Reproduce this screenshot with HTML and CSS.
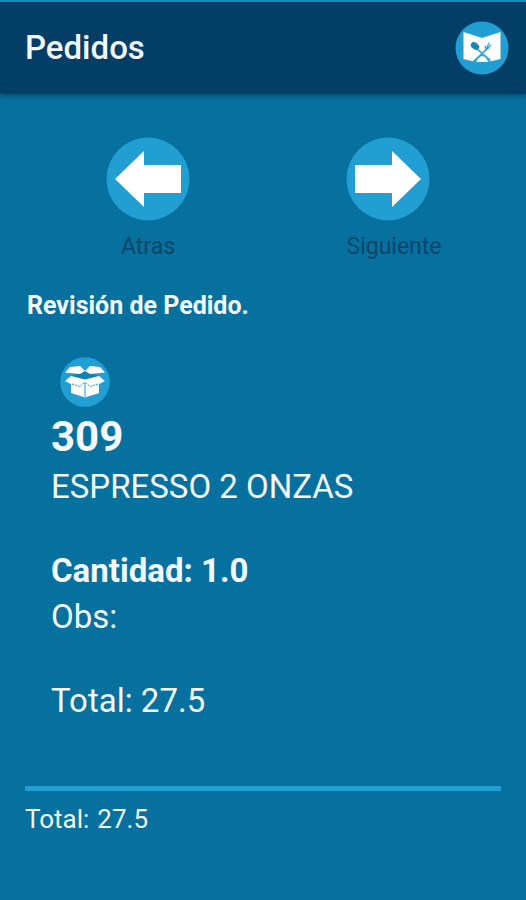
FILE: index.html
```html
<!DOCTYPE html>
<html lang="es">
<head>
  <meta charset="UTF-8" /><meta name="viewport" content="width=device-width, initial-scale=1.0" />
  <title>Pedidos</title>
  <link rel="stylesheet" href="styles.css">
</head>
<body>
  <header class="app-bar">
    <h1>Pedidos</h1>
    <button class="menu-btn" type="button" aria-label="Menú">
      <svg viewBox="0 0 54 54">
        <circle cx="27" cy="27" r="26.5" fill="#219fd3" />
        <path d="M8.5 11L27 17L45.500 11V38L33 41H21L8.500 38Z" fill="#fff" />
        <path d="M18 41L26.500 33L36 41L33.500 41Q30 35 27 35Q24 35 21 41Z" fill="#219fd3" />
        <g stroke="#219fd3" fill="none" stroke-linecap="round">
          <path d="M22 28L35 39M32 28L19 40" stroke-width="1.600" />
          <path d="M30 25L31 28L34 27M34 22L32 26M36 24L32 27" stroke-width="1.100" />
        </g>
        <ellipse cx="20" cy="25" rx="4.600" ry="3.300" transform="rotate(38 20 25)" fill="#1686b9" />
      </svg>
    </button>
  </header>

  <main>
    <nav class="steps">
      <button class="step" type="button">
        <svg viewBox="0 0 84 84">
          <circle cx="42" cy="42" r="41.5" fill="#219fd3" />
          <path d="M9 42L38 14V28H75V56H38V70Z" fill="#fff" />
        </svg>
        <span>Atras</span>
      </button>
      <button class="step next" type="button">
        <svg viewBox="0 0 84 84">
          <circle cx="42" cy="42" r="41.5" fill="#219fd3" />
          <path d="M75 42L46 14V28H9V56H46V70Z" fill="#fff" />
        </svg>
        <span>Siguiente</span>
      </button>
    </nav>

    <h2>Revisión de Pedido.</h2>

    <section class="item">
      <svg class="box-icon" viewBox="0 0 50 50">
        <circle cx="25" cy="25" r="24.8" fill="#219fd3" />
        <path d="M25 14L39 19L25 24L11 19Z" fill="#0f80b2" />
        <g fill="#fff">
          <path d="M10 10L20 9L25 14L20 17L5 15.5Z" />
          <path d="M40 10L30 9L25 14L30 17L45 15.5Z" />
          <path d="M11 19L25 22.500L39 19L45 24L39 27V36L25 40.500L11 36V27L5 24Z" />
        </g>
        <g stroke="#219fd3" fill="none">
          <path d="M25 25V40" stroke-width="1" />
          <path d="M12 27L20 29.500L24 26M38 27L30 29.500L26 26" stroke-width="1" stroke-dasharray="2 1" />
        </g>
      </svg>
      <p class="code">309</p>
      <p>ESPRESSO 2 ONZAS</p>
      <p class="qty">Cantidad: 1.0</p>
      <p>Obs:</p>
      <p class="line-total">Total: 27.5</p>
    </section>

    <footer class="total">
      <span>Total:</span>
      <span>27.5</span>
    </footer>
  </main>
</body>
</html>
```
FILE: styles.css
```css
* { box-sizing: border-box; }
body { margin: 0; min-height: 100vh; font-family: Roboto, sans-serif; background: #06719f; color: #f3f9fd; }
h1, h2, p { margin: 0; }
button { padding: 0; border: none; background: transparent; font: inherit; cursor: pointer; }
svg { display: block; }

.app-bar { display: flex; justify-content: space-between; align-items: center; height: 94px; padding: 0 17px 0 25px; background: #033e66; border-top: 2px solid #168abb; box-shadow: 0 2px 5px rgba(0,0,0,0.35); }
.app-bar h1 { font-size: 33px; line-height: 40px; font-weight: 500; }
.menu-btn svg { width: 54px; height: 54px; }

main { padding: 43px 25px 24px; }
.steps { display: grid; grid-template-columns: 1fr 1fr; margin-right: -16px; }
.step { display: flex; flex-direction: column; align-items: center; gap: 10px; justify-self: center; color: #07466a; font-size: 23px; line-height: 32px; }
.step svg { width: 84px; height: 84px; }
.step.next { align-items: flex-start; }

h2 { margin: 27px 2px 0; font-size: 25px; line-height: 32px; font-weight: 700; }

.item { padding: 35px 26px 0; font-size: 33px; line-height: 46px; }
.box-icon { width: 50px; height: 50px; margin-left: 9px; }
.item .code { margin-top: 3px; font-size: 42px; line-height: 54px; font-weight: 700; }
.qty { margin-top: 38px; font-weight: 700; }
.line-total { margin-top: 38px; }

.total { display: flex; gap: 8px; margin-top: 62px; padding-top: 12px; border-top: 5px solid #219fd3; font-size: 26px; line-height: 32px; }
```
